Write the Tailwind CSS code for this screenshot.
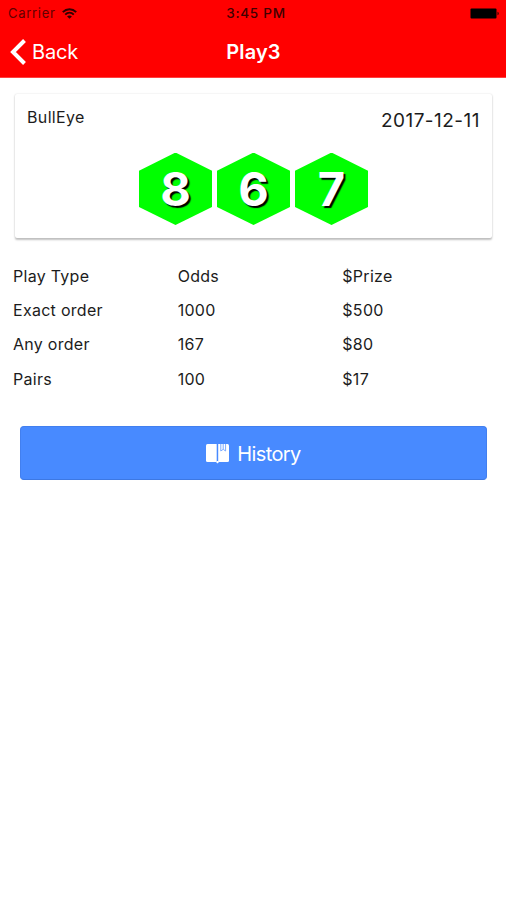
<!DOCTYPE html>
<html lang="en">
<head>
<meta charset="utf-8">
<meta name="viewport" content="width=device-width, initial-scale=1">
<title>Play3</title>
<script src="https://cdn.jsdelivr.net/npm/@tailwindcss/browser@4"></script>
</head>
<body class="bg-white">
<div class="flex h-[900px] w-[506px] flex-col overflow-hidden bg-white font-[Inter,sans-serif] text-[#1c1c1c]">
  <header class="h-[78px] shrink-0 border-b border-[#ff4040] bg-[#ff0000]">
    <div class="grid h-[26px] grid-cols-3 items-center pl-2 pr-[7px] text-[13px] leading-[26px] text-[#600000]">
      <div class="flex items-center gap-[6px]">
        <span class="tracking-[0.7px]">Carrier</span>
        <svg class="h-[11px] w-[15px]" viewBox="0 0 15 11" fill="none" stroke="#300000" stroke-width="2"><path d="M.8 4.1C4.6.3 10.4.3 14.2 4.1M3.2 6.6C5.7 4.2 9.3 4.2 11.8 6.6"/><path d="M7.5 10.8 5.1 8.4C6.4 7.2 8.6 7.2 9.9 8.4Z" fill="#300000" stroke="none"/></svg>
      </div>
      <span class="pl-[5px] text-center text-[13.5px] font-medium tracking-[0.75px] text-[#400000]">3:45 PM</span>
      <svg class="h-[11px] w-[29px] justify-self-end" viewBox="0 0 29 11"><rect x=".5" y=".5" width="26" height="10" rx="1" fill="#000"/><path d="M27.5 3.7c1.7.5 1.7 3.1 0 3.6Z" fill="#300000"/></svg>
    </div>
    <div class="grid h-[51px] grid-cols-3 items-center pl-[10px] pr-[9px] text-white">
      <div class="flex items-center gap-[6px]">
        <svg class="h-[26px] w-4" viewBox="0 0 16 26" fill="none" stroke="#fff" stroke-width="4"><path d="M14.5 1.5 3 13l11.500 11.500"/></svg>
        <span class="text-[20px] tracking-[-0.2px]">Back</span>
      </div>
      <h1 class="text-center text-[20px] font-semibold tracking-[0.1px]">Play3</h1>
    </div>
  </header>

  <main>
    <section class="ml-[15px] mt-4 h-[144px] w-[477px] rounded-[2px] bg-white px-3 shadow-[0_1.5px_2px_rgba(0,0,0,0.24),0_0_2px_rgba(0,0,0,0.1)]">
      <div class="flex h-[58.5px] items-start justify-between">
        <span class="pt-[13px] text-[16px] leading-5 tracking-[0.35px]">BullEye</span>
        <span class="pt-[17px] text-[19px] leading-5 tracking-[0.48px]">2017-12-11</span>
      </div>
      <div class="flex justify-center gap-[5px]">
        <div class="flex h-[72.5px] w-[73px] items-center justify-center bg-[#00ff00] text-[47px] font-bold text-white [clip-path:polygon(50%_0,100%_25%,100%_75%,50%_100%,0_75%,0_25%)] [text-shadow:2px_2px_1px_#000]">8</div>
        <div class="flex h-[72.5px] w-[73px] items-center justify-center bg-[#00ff00] text-[47px] font-bold text-white [clip-path:polygon(50%_0,100%_25%,100%_75%,50%_100%,0_75%,0_25%)] [text-shadow:2px_2px_1px_#000]">6</div>
        <div class="flex h-[72.5px] w-[73px] items-center justify-center bg-[#00ff00] text-[47px] font-bold text-white [clip-path:polygon(50%_0,100%_25%,100%_75%,50%_100%,0_75%,0_25%)] [text-shadow:2px_2px_1px_#000]">7</div>
      </div>
    </section>

    <section class="ml-[13px] mt-[21px] grid w-[494px] auto-rows-[34.2px] grid-cols-3 items-center text-[16px] leading-5 tracking-[0.28px]">
      <span>Play Type</span><span>Odds</span><span>$Prize</span>
      <span>Exact order</span><span>1000</span><span>$500</span>
      <span>Any order</span><span>167</span><span>$80</span>
      <span>Pairs</span><span>100</span><span>$17</span>
    </section>

    <button class="ml-5 mt-[30px] flex h-[54px] w-[467px] items-center justify-center gap-2 rounded-[4px] border border-[#427fef] border-b-[#3d78e3] bg-[#488aff] pt-px text-[20px] text-white">
      <svg class="h-[21px] w-[23px]" viewBox="0 0 23 21"><path d="M1.500 1H10.700V19H1.500Q0 19 0 17.500V2.500Q0 1 1.500 1Z" fill="#fff"/><path d="M12.200 1H21.500Q23 1 23 2.500V17.500Q23 19 21.500 19H12.200Z" fill="#fff"/><path d="M10.500 18h2v1.500l-1 1-1-1Z" fill="#fff"/><path d="M14.800 1v7l2.400-1.700L19.600 8V1" fill="none" stroke="#7dabff"/><path d="M17.200 1v5" stroke="#7dabff"/></svg>
      <span class="pt-px tracking-[-0.6px]">History</span>
    </button>
  </main>
</div>
</body>
</html>
